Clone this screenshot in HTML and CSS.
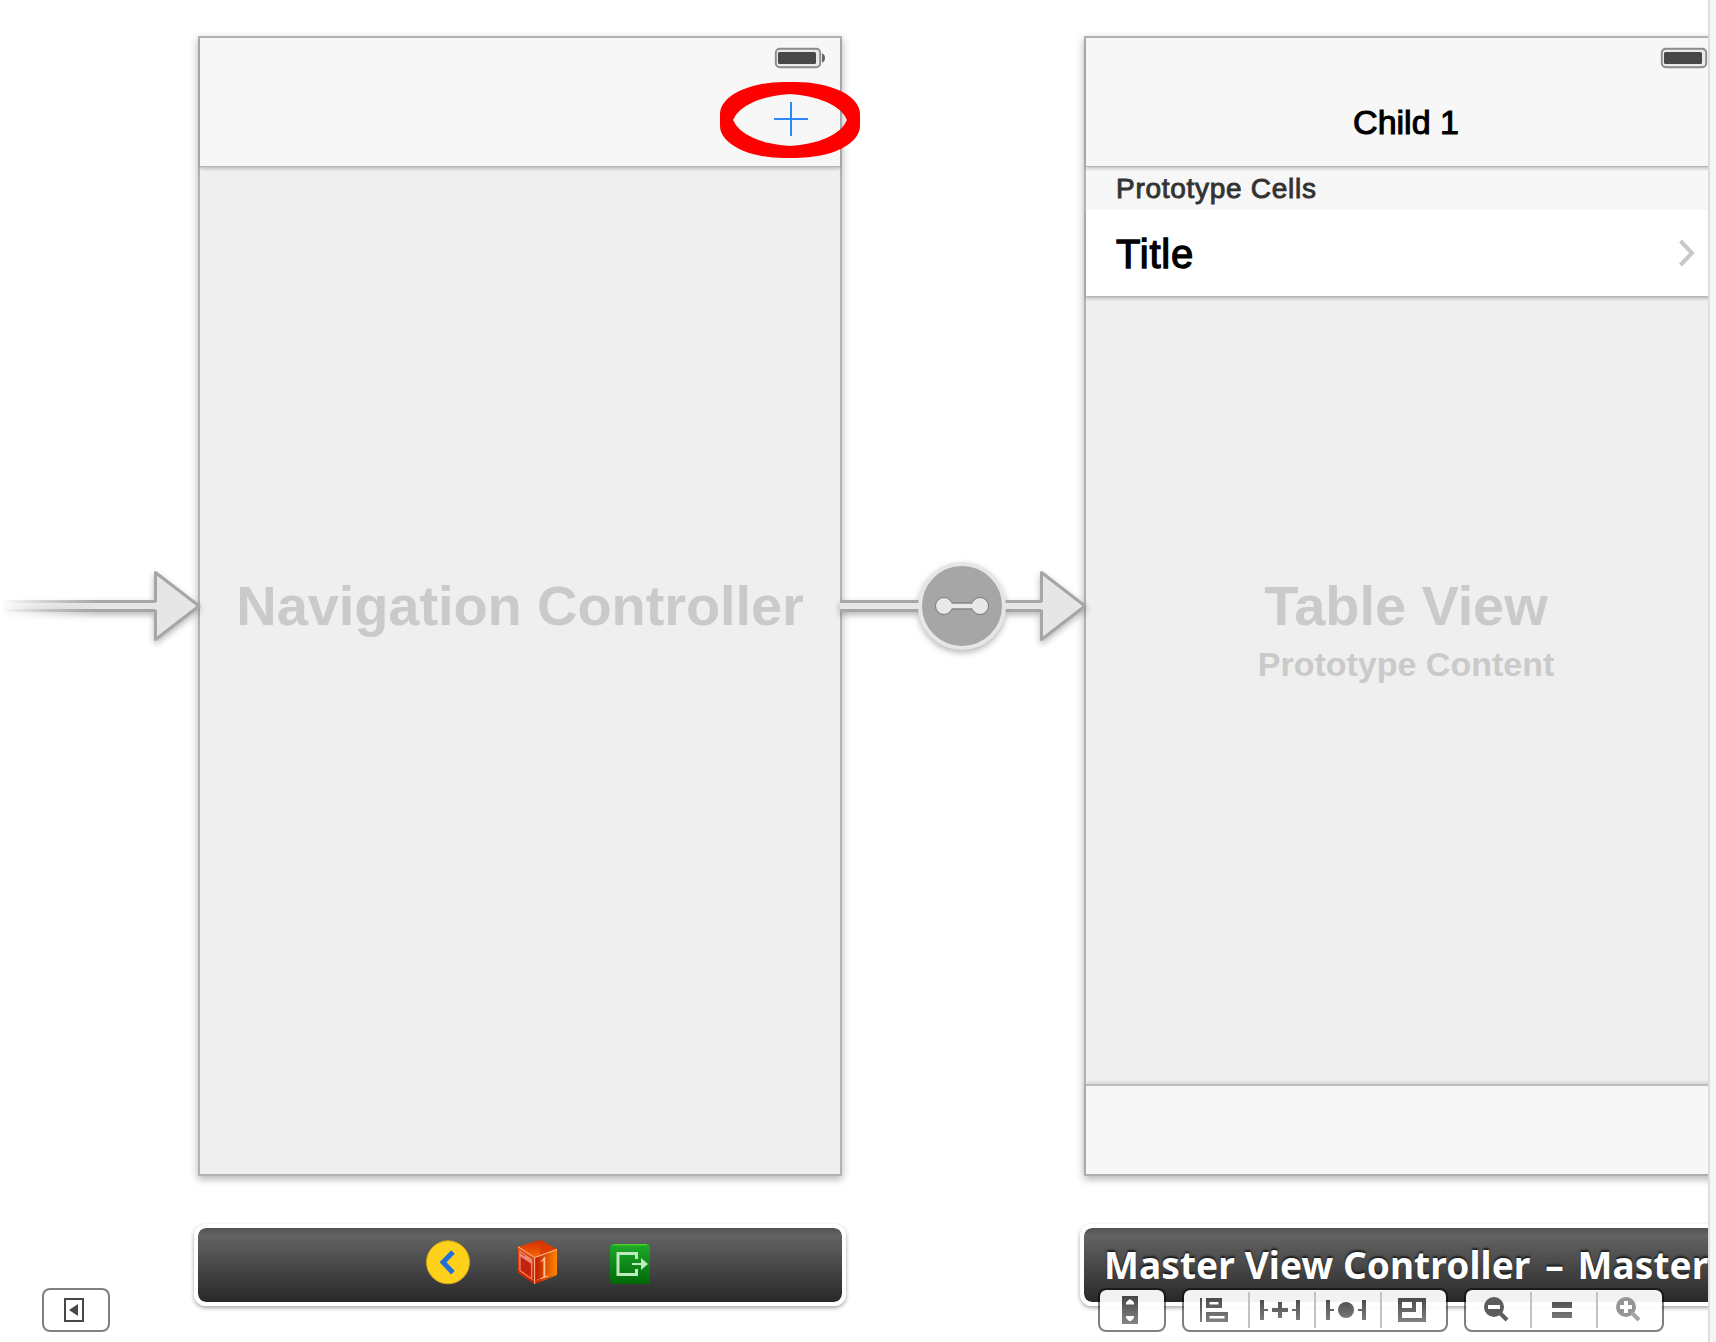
FILE: index.html
```html
<!DOCTYPE html>
<html lang="en">
<head>
<meta charset="utf-8">
<title>Storyboard</title>
<link rel="stylesheet" href="styles.css">
</head>
<body>
<svg class="defs" width="0" height="0" aria-hidden="true">
  <defs>
    <linearGradient id="ink" gradientUnits="userSpaceOnUse" x1="0" y1="6" x2="0" y2="34"><stop offset="0" stop-color="#454545"/><stop offset="1" stop-color="#858585"/></linearGradient>
    <linearGradient id="fadeDark" gradientUnits="userSpaceOnUse" x1="0" y1="0" x2="100" y2="0"><stop offset="0" stop-color="#a6a6a6" stop-opacity="0"/><stop offset="1" stop-color="#a6a6a6"/></linearGradient>
    <linearGradient id="fadeLight" gradientUnits="userSpaceOnUse" x1="0" y1="0" x2="100" y2="0"><stop offset="0" stop-color="#e6e6e6" stop-opacity="0"/><stop offset="1" stop-color="#e6e6e6"/></linearGradient>
    <linearGradient id="green" x1="0" y1="0" x2="0" y2="1"><stop offset="0" stop-color="#1eaa28"/><stop offset="1" stop-color="#006806"/></linearGradient>
    <linearGradient id="cubeTop" x1="0" y1="0" x2="0" y2="1"><stop offset="0" stop-color="#d52c00"/><stop offset="1" stop-color="#f56a08"/></linearGradient>
    <linearGradient id="cubeRight" x1="0" y1="0" x2="1" y2="0"><stop offset="0" stop-color="#bd1a00"/><stop offset="1" stop-color="#ff8500"/></linearGradient>
    <linearGradient id="cubeLeft" x1="0" y1="0" x2="0" y2="1"><stop offset="0" stop-color="#ee5510"/><stop offset="1" stop-color="#c41c02"/></linearGradient>
    <symbol id="battery" viewBox="0 0 52 22" overflow="visible">
      <rect x="1.8" y="1.8" width="44.4" height="18.4" rx="4" fill="#e9e9e9" stroke="#8b8b8b" stroke-width="1.9"/>
      <rect x="4" y="5" width="38" height="12" rx="1.5" fill="#484848"/>
      <path d="M48 6.5q3 .8 3 4.500t-3 4.500z" fill="#666"/>
    </symbol>
  </defs>
</svg>

<main class="canvas">
  <section class="device device-nav">
    <header class="navbar">
      <svg class="battery" width="52" height="22"><use href="#battery"/></svg>
      <svg class="add" width="34" height="34" viewBox="0 0 34 34"><path d="M17 0v34M0 17h34" stroke="#2b88fd" stroke-width="2"/></svg>
    </header>
    <div class="content"><h1 class="big">Navigation Controller</h1></div>
  </section>

  <section class="device device-table">
    <header class="navbar">
      <svg class="battery" width="52" height="22"><use href="#battery"/></svg>
      <h2 class="nav-title">Child 1</h2>
    </header>
    <div class="section-head">Prototype Cells</div>
    <div class="cell"><span class="cell-title">Title</span>
      <svg width="18" height="28" viewBox="0 0 18 28"><path d="M2.500 2l11.500 12l-11.500 12" fill="none" stroke="#c7c7cc" stroke-width="4"/></svg>
    </div>
    <div class="content content-table">
      <h1 class="big">Table View</h1>
      <p class="small">Prototype Content</p>
    </div>
    <footer class="toolbar"></footer>
  </section>

  <svg class="segue entry" width="202" height="100" viewBox="0 556 202 100">
    <path d="M0 600h156v3H0zM0 609h156v3H0z" fill="url(#fadeDark)"/>
    <path d="M155.500 602V572.500L199 606L155.500 639.500V610" fill="#e6e6e6" stroke="#a6a6a6" stroke-width="3" stroke-linejoin="round"/>
    <path d="M0 603h158v6H0z" fill="url(#fadeLight)"/>
  </svg>
  <svg class="segue link" width="248" height="110" viewBox="840 556 248 110">
    <path d="M840 600h202v12H840z" fill="#a6a6a6"/>
    <path d="M1041.500 602V572.500L1085 606L1041.500 639.500V610" fill="#e6e6e6" stroke="#a6a6a6" stroke-width="3" stroke-linejoin="round"/>
    <path d="M840 603h204v6H840z" fill="#e6e6e6"/>
    <circle cx="962" cy="606" r="42" fill="#a6a6a6" stroke="#e6e6e6" stroke-width="4"/>
    <g fill="#e8e8e8" stroke="#777" stroke-width="1"><circle cx="944" cy="606" r="8.500"/><circle cx="980" cy="606" r="8.500"/><path d="M951 603.500h22v5h-22z" stroke="none"/><path d="M952 603h20M952 609h20"/></g>
  </svg>

  <div class="dock dock-nav">
    <svg width="46" height="46" viewBox="0 0 46 46"><circle cx="22" cy="22.300" r="21.500" fill="#ffd11b" stroke="#d9a41c"/><path d="M27 12L17 22.300L27 32.700" fill="none" stroke="#2070dc" stroke-width="5"/></svg>
    <svg class="cube" width="46" height="46" viewBox="1008 240 138 138">
      <path d="M1014 260L1080 240L1131 268L1064 293z" fill="url(#cubeTop)"/>
      <path d="M1080 240V287L1131 268z" fill="#d93200" opacity=".6"/>
      <path d="M1014 260L1064 293V373L1014 338z" fill="url(#cubeLeft)"/>
      <path d="M1064 293L1131 268V345L1064 373z" fill="url(#cubeRight)"/>
      <path d="M1014 260L1064 293L1131 268M1064 293V372" fill="none" stroke="#ffc09c" stroke-width="3"/>
      <path d="M1020 274L1055 299V357L1020 332z" fill="#c32211" stroke="#f4a18b" stroke-width="3"/>
      <path d="M1020 274L1055 299V312L1020 289z" fill="#eb8a75"/>
      <path d="M1022 279l14 10" stroke="#c32211" stroke-width="4" stroke-dasharray="3 3"/>
      <path d="M1024 333L1064 363L1127 337" fill="none" stroke="#ff7a18" stroke-width="2"/>
      <text class="cube-one" transform="translate(1077 359) skewY(-20) scale(.9 1.4)">1</text>
    </svg>
    <svg class="exit" width="46" height="46" viewBox="0 0 46 46"><rect x="2" y="4" width="40" height="40" rx="4" fill="url(#green)"/><path d="M5 4.800h34" stroke="#46cf27" stroke-width="1.500"/><path d="M28.500 19v-5.500h-18.500v21h18.500V29" fill="none" stroke="#bfe9c0" stroke-width="3"/><path d="M24 23h9v-5l7 6l-7 6v-5h-9z" fill="#bfe9c0"/></svg>
  </div>
  <div class="dock dock-table"><span class="dock-title">Master View Controller <span class="dash">–</span> Master</span></div>

  <svg class="marker" width="140" height="76" viewBox="0 0 140 76">
    <path fill="red" fill-rule="evenodd" d="M64 0H76A64 32 0 0 1 140 32V44A64 32 0 0 1 76 76H64A64 32 0 0 1 0 44V32A64 32 0 0 1 64 0zM70 12.100A64 32 0 0 0 13.100 38A64 32 0 0 0 70 63.900A64 32 0 0 0 126.900 38A64 32 0 0 0 70 12.100z"/>
  </svg>

  <div class="controls">
    <div class="group">
      <svg class="seg" viewBox="0 0 64 40"><rect x="21" y="9" width="18" height="22" fill="none" stroke="#484848" stroke-width="2"/><path d="M25 20l9-6v12z" fill="#484848"/></svg>
    </div>
    <div class="group fit">
      <svg class="seg" viewBox="0 0 64 40"><path d="M22 6h16v28H22z" fill="url(#ink)"/><path d="M29 9.500h2l3 3v2h-8v-2zM26 26h8v2l-3 3h-2l-3-3z" fill="#fff"/></svg>
    </div>
    <div class="group">
      <svg class="seg" viewBox="0 0 64 40"><path d="M16 8h2v24h-2zM22 8h16v10H22zM22 22h22v10H22z" fill="url(#ink)"/><path d="M25.500 12h9v2.500h-9zM25.500 26h15v2.500h-15z" fill="#fff"/></svg>
      <svg class="seg" viewBox="0 0 64 40"><path d="M10 10h4v9h4v2h-4v9h-4zM50 10h-4v9h-4v2h4v9h4zM28 12h4v6h6v4h-6v6h-4v-6h-6v-4h6z" fill="url(#ink)"/></svg>
      <svg class="seg" viewBox="0 0 64 40"><path d="M10 10h4v9h4v2h-4v9h-4zM50 10h-4v9h-4v2h4v9h4z" fill="url(#ink)"/><circle cx="30" cy="20" r="8" fill="url(#ink)"/></svg>
      <svg class="seg" viewBox="0 0 64 40"><path d="M16 8h28v24H16z" fill="url(#ink)"/><path d="M20 12h10v6H20zM34 12h6v16H20v-6h14z" fill="#fff"/></svg>
    </div>
    <div class="group">
      <svg class="seg" viewBox="0 0 64 40"><circle cx="28" cy="17" r="10" fill="#5c5c5c"/><path d="M33.500 22.500l7.500 7.500" stroke="#5c5c5c" stroke-width="4"/><path d="M22 15h12v4H22z" fill="#fff"/></svg>
      <svg class="seg" viewBox="0 0 64 40"><path d="M20 12h20v6H20zM20 22h20v6H20z" fill="url(#ink)"/></svg>
      <svg class="seg" viewBox="0 0 64 40"><circle cx="28" cy="17" r="10" fill="#959595"/><path d="M33.500 22.500l7.500 7.500" stroke="#a5a5a5" stroke-width="4"/><path d="M22 15h4v-4h4v4h4v4h-4v4h-4v-4h-4z" fill="#fff"/></svg>
    </div>
  </div>
</main>
<aside class="edge"></aside>
</body>
</html>
```
FILE: styles.css
```css
* { box-sizing: border-box; }
body {
  margin: 0;
  height: 1342px;
  display: flex;
  overflow: hidden;
  background: #fff;
  font-family: "Liberation Sans", Arial, sans-serif;
}
h1, h2, p { margin: 0; }
svg { display: block; flex: none; }
.defs { position: absolute; }

.canvas {
  position: relative;
  width: 1708px;
  height: 1342px;
  overflow: hidden;
  flex: none;
}
.edge {
  flex: 1;
  background: #f5f5f5;
  border-left: 2px solid #dedede;
}

/* Scenes on the free canvas */
.device {
  position: absolute;
  top: 36px;
  width: 644px;
  height: 1140px;
  display: flex;
  flex-direction: column;
  background: #efefef;
  border: 2px solid #b2b2b2;
  box-shadow: 0 3px 8px rgba(0, 0, 0, .3);
  isolation: isolate;
}
.device-nav { left: 198px; }
.device-table { left: 1084px; }

.navbar {
  height: 129px;
  flex: none;
  display: flex;
  flex-direction: column;
  align-items: flex-end;
  padding: 9px 14px 0 0;
  background: #f7f7f7;
  border-bottom: 1px solid #b5b5b5;
  box-shadow: 0 2px 3px rgba(0, 0, 0, .2);
  position: relative;
  z-index: 1;
}
.add { margin: 33px 18px 0 0; }
.nav-title {
  width: 612px;
  margin-top: 33px;
  line-height: 40px;
  font-size: 34px;
  font-weight: 400;
  text-align: center;
  -webkit-text-stroke: 1.1px #000;
}

.content {
  flex: 1;
  display: flex;
  flex-direction: column;
  align-items: center;
  padding-top: 407px;
  color: #cacaca;
}
.big {
  font-size: 56px;
  line-height: 64px;
  font-weight: 700;
  letter-spacing: -.1px;
  white-space: nowrap;
}
.small { font-size: 34px; line-height: 40px; font-weight: 700; margin-top: 6px; }

.section-head {
  height: 43px;
  flex: none;
  padding-left: 30px;
  background: #f7f7f7;
  color: #333;
  font-size: 28px;
  line-height: 43px;
  letter-spacing: .72px;
  -webkit-text-stroke: .9px #333;
}
.cell {
  height: 87px;
  flex: none;
  display: flex;
  align-items: center;
  padding-left: 30px;
  background: #fff;
  border-bottom: 1px solid #b5b5b5;
  box-shadow: 0 2px 3px rgba(0, 0, 0, .2);
}
.cell-title {
  width: 562px;
  padding-top: 2px;
  font-size: 40px;
  letter-spacing: .8px;
  -webkit-text-stroke: 1.3px #000;
}
.content-table { padding-top: 277px; }
.toolbar {
  height: 90px;
  flex: none;
  background: #f7f7f7;
  border-top: 2px solid #bdbdbd;
  box-shadow: 0 -1px 4px rgba(0, 0, 0, .16);
}

/* Segue arrows */
.segue { position: absolute; top: 556px; filter: drop-shadow(0 3px 3px rgba(0, 0, 0, .28)); }
.entry { left: 0; }
.link { left: 840px; }

/* Scene docks */
.dock {
  position: absolute;
  top: 1224px;
  width: 652px;
  height: 82px;
  display: flex;
  border: 4px solid #fff;
  border-radius: 12px;
  background: linear-gradient(#525252, #636363 10%, #282828) padding-box;
  box-shadow: 0 2px 4px rgba(0, 0, 0, .35);
}
.dock-nav { left: 194px; padding: 12px 0 0 228px; }
.dock-table { left: 1080px; padding-left: 20px; }
.cube { margin-left: 44px; }
.exit { margin-left: 46px; }
.cube-one { font: 68px "Liberation Serif", serif; fill: #ffc09c; }
.dock-title {
  font: 700 37px/73px "Noto Sans", "Open Sans", sans-serif;
  letter-spacing: .1px;
  color: #fff;
  white-space: nowrap;
  text-shadow: 0 -2px 2px rgba(0, 0, 0, .65);
}
.dash { margin: 0 4px 0 5px; }

.marker { position: absolute; left: 720px; top: 82px; }

/* Floating canvas controls */
.controls {
  position: absolute;
  left: 42px;
  top: 1288px;
  display: flex;
  gap: 16px;
}
.group {
  height: 44px;
  display: flex;
  background: rgba(255, 255, 255, .94) padding-box;
  border: 2px solid rgba(0, 0, 0, .5);
  border-radius: 8px;
}
.fit { margin-left: 972px; }
.seg { width: 64px; height: 40px; }
.seg + .seg {
  width: 66px;
  border-style: solid;
  border-width: 0 0 0 2px;
  border-image: linear-gradient(transparent 4px, #c2c2c2 4px, #c2c2c2 36px, transparent 36px) 2;
}
```
